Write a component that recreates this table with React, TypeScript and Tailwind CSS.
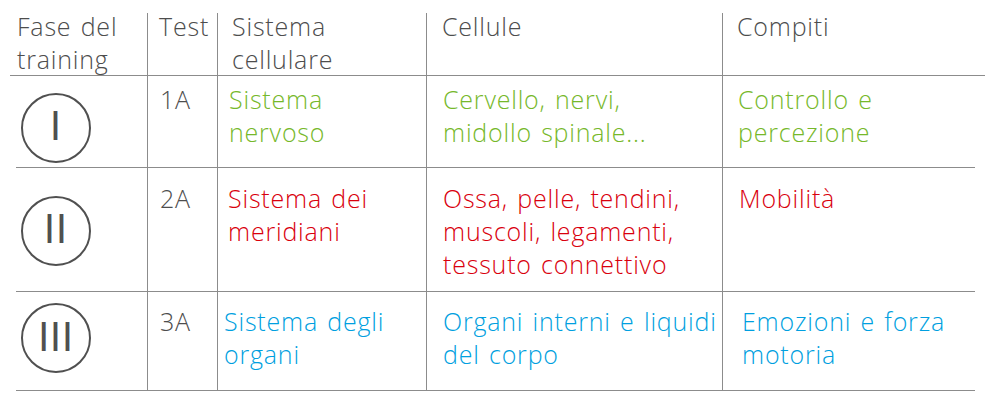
import React from 'react';

const cols = 'grid grid-cols-[137px_70px_209px_296px_1fr]';
const cell = 'border-l border-[#8c8c8c]';

const rows = [
  {
    num: 'I',
    test: '1A',
    color: 'text-[#76b82a]',
    h: 'h-[91px]',
    pt: 'pt-[7px]',
    circleMt: 'mt-[12px]',
    sisPl: 'pl-[11px]',
    compPl: 'pl-[15px]',
    sistema: ['Sistema', 'nervoso'],
    cellule: ['Cervello, nervi,', 'midollo spinale...'],
    compiti: ['Controllo e', 'percezione'],
  },
  {
    num: 'II',
    test: '2A',
    color: 'text-[#d9000d]',
    h: 'h-[123px]',
    pt: 'pt-[14px]',
    circleMt: 'mt-[2px]',
    sisPl: 'pl-[10px]',
    compPl: 'pl-[16px]',
    sistema: ['Sistema dei', 'meridiani'],
    cellule: ['Ossa, pelle, tendini,', 'muscoli, legamenti,', 'tessuto connettivo'],
    compiti: ['Mobilità'],
  },
  {
    num: 'III',
    test: '3A',
    color: 'text-[#009fe0]',
    h: 'h-[98px]',
    pt: 'pt-[13px]',
    circleMt: '-mt-[6px]',
    sisPl: 'pl-[6px]',
    compPl: 'pl-[19px]',
    sistema: ['Sistema degli', 'organi'],
    cellule: ['Organi interni e liquidi', 'del corpo'],
    compiti: ['Emozioni e forza', 'motoria'],
  },
];

const Lines = ({ lines }: { lines: string[] }) => (
  <>
    {lines.map((l, i) => (
      <div key={i} className="whitespace-nowrap">
        {l}
      </div>
    ))}
  </>
);

export default function App() {
  return (
    <div className="w-[1000px] h-[410px] bg-white text-[#4d4d4d] text-[25px] leading-[33px] font-light tracking-[0.8px] [word-spacing:2px] font-['Open_Sans','Liberation_Sans',sans-serif]">
      <div className="pt-[13px] pl-[10px] w-[985px]">
        {/* Header */}
        <div className={`${cols} h-[63px] border-b border-[#8c8c8c]`}>
          <div className="pl-[7px] -mt-[3px]">
            <div>Fase del</div>
            <div>training</div>
          </div>
          <div className={`${cell} pl-[11px]`}>
            <div className="-mt-[3px]">Test</div>
          </div>
          <div className={`${cell} pl-[14px]`}>
            <div className="-mt-[3px]">
              <div>Sistema</div>
              <div>cellulare</div>
            </div>
          </div>
          <div className={`${cell} pl-[15px]`}>
            <div className="-mt-[3px]">Cellule</div>
          </div>
          <div className={`${cell} pl-[14px]`}>
            <div className="-mt-[3px]">Compiti</div>
          </div>
        </div>

        {rows.map((r) => (
          <div key={r.test}>
            <div className={`${cols} ${r.h} mr-[10px]`}>
              <div className="flex items-center pl-[11px]">
                {/* roman numeral badge */}
                <div
                  className={`${r.circleMt} w-[70px] h-[70px] rounded-full border-2 border-[#505050] flex items-center justify-center text-[#505050] text-[40px] leading-none font-normal tracking-[1px] [word-spacing:0px]`}
                >
                  <span className="-mt-[1px] [font-family:Roboto,sans-serif]">{r.num}</span>
                </div>
              </div>
              <div className={`${cell} pl-[12px] ${r.pt}`}>{r.test}</div>
              <div className={`${cell} ${r.sisPl} ${r.pt} ${r.color}`}>
                <Lines lines={r.sistema} />
              </div>
              <div className={`${cell} pl-[16px] ${r.pt} ${r.color}`}>
                <Lines lines={r.cellule} />
              </div>
              <div className={`${cell} ${r.compPl} ${r.pt} ${r.color}`}>
                <Lines lines={r.compiti} />
              </div>
            </div>
            <div className="ml-[6px] mr-[10px] h-px bg-[#8c8c8c]" />
          </div>
        ))}
      </div>
    </div>
  );
}
